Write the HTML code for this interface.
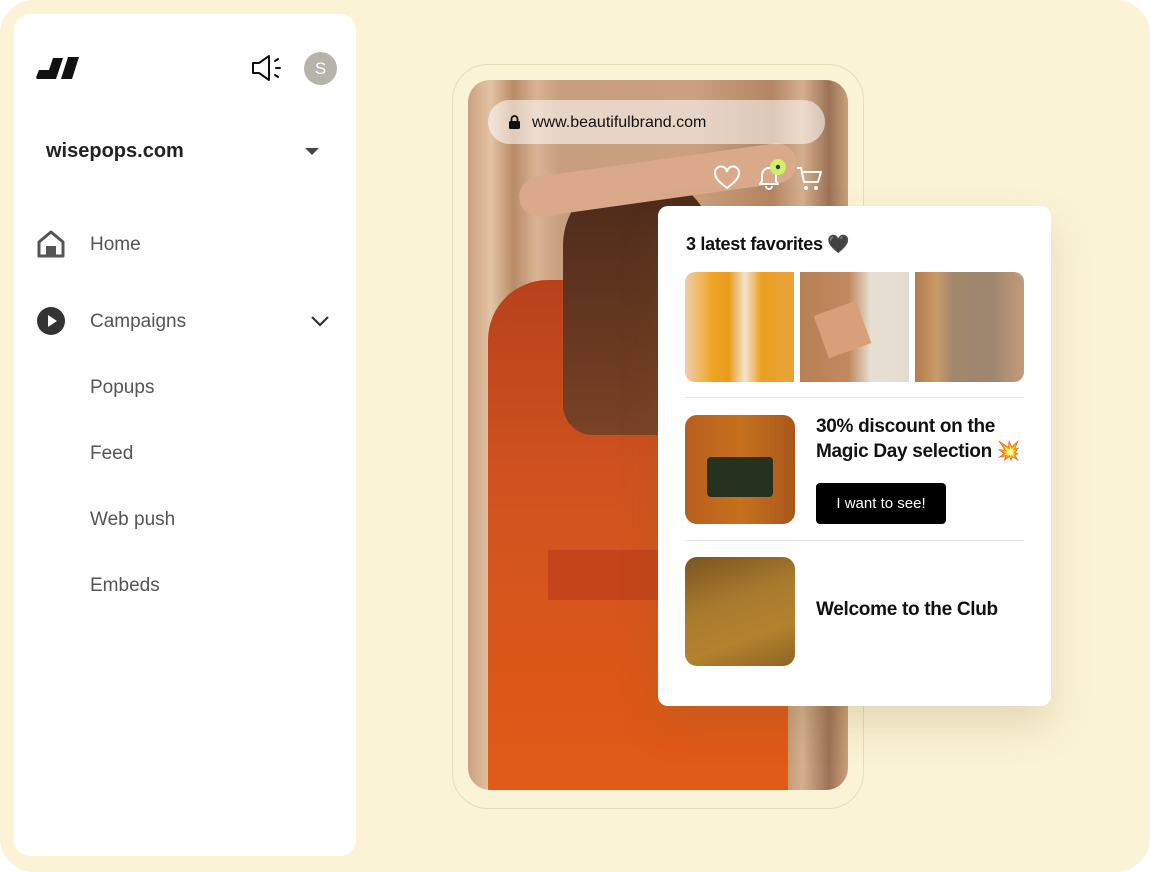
<!DOCTYPE html>
<html><head><meta charset="utf-8"><style>
*{margin:0;padding:0;box-sizing:border-box}
body{width:1150px;height:872px;background:#fff;font-family:"Liberation Sans",sans-serif;position:relative;overflow:hidden}
.bg{position:absolute;left:0;top:0;width:1150px;height:872px;background:#fbf3d6;border-radius:34px}
.side{position:absolute;left:14px;top:14px;width:342px;height:842px;background:#fff;border-radius:16px}
.t{position:absolute;white-space:nowrap}
.nav{font-size:19px;color:#555}
.phone{position:absolute;left:452px;top:64px;width:412px;height:745px;border:1.5px solid #e6dcb8;border-radius:36px;background:#fbf3d6}
.screen{position:absolute;left:468px;top:80px;width:380px;height:710px;border-radius:22px;overflow:hidden;
background:linear-gradient(90deg,#c9a282 0%,#e3c4a4 6%,#b98b66 12%,#d8b494 18%,#c89f7e 24%,#caa07e 60%,#b38663 80%,#d5b08e 88%,#9c7256 95%,#c9a07c 100%)}
.card{position:absolute;left:658px;top:206px;width:393px;height:500px;background:#fff;border-radius:10px;box-shadow:0 20px 40px rgba(120,100,40,.18)}
.img{position:absolute;overflow:hidden}
.b{font-weight:bold;letter-spacing:-0.3px}
</style></head><body>
<div class="bg"></div>
<div class="side">
<svg style="position:absolute;left:22px;top:42px" width="44" height="24" viewBox="0 0 44 24"><path d="M3 14h11l-3 9H2q-3 0-1-4z M17 2h10l-7 21H10z M32 1h11l-7 22H25z" fill="#111"/></svg>
<svg style="position:absolute;left:237px;top:40px" width="32" height="28" viewBox="0 0 32 28"><path d="M2 9h6l10-7v24L8 19H2z" fill="none" stroke="#111" stroke-width="2" stroke-linejoin="round"/><path d="M24 7l3-2M25 14h4M24 21l3 2" stroke="#111" stroke-width="2" stroke-linecap="round"/></svg>
<div style="position:absolute;left:290px;top:38px;width:33px;height:33px;border-radius:50%;background:#b6b3ab;color:#fff;font-size:17px;text-align:center;line-height:33px">S</div>
<div class="t b" style="left:32px;top:126px;font-size:20px;color:#222;letter-spacing:0">wisepops.com</div>
<div style="position:absolute;left:291px;top:134px;width:0;height:0;border-left:7px solid transparent;border-right:7px solid transparent;border-top:7px solid #444"></div>
<svg style="position:absolute;left:23px;top:216px" width="28" height="28" viewBox="0 0 28 28"><path d="M2 12L14 2l12 10v14H2z" fill="none" stroke="#555" stroke-width="3" stroke-linejoin="round"/><rect x="9" y="16" width="10" height="10" fill="#555"/></svg>
<div class="t nav" style="left:76px;top:220px">Home</div>
<svg style="position:absolute;left:23px;top:293px" width="28" height="28" viewBox="0 0 28 28"><circle cx="14" cy="14" r="14" fill="#333"/><path d="M11 8l9 6-9 6z" fill="#fff"/></svg>
<div class="t nav" style="left:76px;top:297px">Campaigns</div>
<svg style="position:absolute;left:296px;top:300px" width="20" height="14" viewBox="0 0 20 14"><path d="M2 3l8 8 8-8" fill="none" stroke="#333" stroke-width="2.2"/></svg>
<div class="t nav" style="left:76px;top:363px">Popups</div>
<div class="t nav" style="left:76px;top:429px">Feed</div>
<div class="t nav" style="left:76px;top:495px">Web push</div>
<div class="t nav" style="left:76px;top:561px">Embeds</div>
</div>
<div class="phone"></div>
<div class="screen">
 <div style="position:absolute;left:20px;top:200px;width:300px;height:510px;background:linear-gradient(180deg,#b8411c,#d0531f 40%,#e15a17 100%);border-radius:60px 60px 0 0"></div>
 <div style="position:absolute;left:95px;top:95px;width:150px;height:260px;background:linear-gradient(180deg,#4a2a1a,#6b3a22 70%,#7a4226);border-radius:70px 70px 30px 30px"></div>
 <div style="position:absolute;left:50px;top:80px;width:280px;height:40px;background:#d9a98a;border-radius:20px;transform:rotate(-8deg)"></div>
 <div style="position:absolute;left:80px;top:470px;width:160px;height:50px;background:#c4451a"></div>
 <div style="position:absolute;left:20px;top:20px;width:337px;height:44px;border-radius:22px;background:rgba(255,255,255,.55)"></div>
 <svg style="position:absolute;left:41px;top:35px" width="11" height="14" viewBox="0 0 11 14"><rect x="0" y="6" width="11" height="8" rx="1.5" fill="#111"/><path d="M2.5 6V4a3 3 0 016 0v2" fill="none" stroke="#111" stroke-width="1.8"/></svg>
 <div class="t" style="left:64px;top:34px;font-size:16px;color:#111">www.beautifulbrand.com</div>
 <svg style="position:absolute;left:245px;top:85px" width="28" height="26" viewBox="0 0 28 26"><path d="M14 23C6 17 2 13 2 8a6 6 0 0112-1 6 6 0 0112 1c0 5-4 9-12 15z" fill="none" stroke="#fff" stroke-width="2"/></svg>
 <svg style="position:absolute;left:288px;top:79px" width="32" height="32" viewBox="0 0 32 32"><path d="M4 25h18l-2-3v-6a7 7 0 00-14 0v6z M10 27a3 3 0 006 0" fill="none" stroke="#fff" stroke-width="2" stroke-linejoin="round"/><circle cx="22" cy="8" r="8" fill="#cdf26a"/><circle cx="22" cy="8" r="2.2" fill="#333"/></svg>
 <svg style="position:absolute;left:328px;top:86px" width="28" height="26" viewBox="0 0 28 26"><path d="M1 2h4l3 14h14l3-10H7" fill="none" stroke="#fff" stroke-width="2" stroke-linejoin="round"/><circle cx="10" cy="22" r="2" fill="#fff"/><circle cx="20" cy="22" r="2" fill="#fff"/></svg>
</div>
<div class="card">
 <div class="t b" style="left:28px;top:28px;font-size:18px;color:#111">3 latest favorites 🖤</div>
 <div class="img" style="left:27px;top:66px;width:339px;height:110px;border-radius:10px">
  <div style="position:absolute;left:0;top:0;width:109px;height:110px;background:linear-gradient(90deg,#eecfae 0%,#f1a424 25%,#e89a1c 40%,#f3e4d0 55%,#eba020 70%,#e8a33a 100%)"></div>
  <div style="position:absolute;left:115px;top:0;width:109px;height:110px;background:linear-gradient(90deg,#b97e54 0%,#c08a60 45%,#e6dfd4 65%,#e4dcd0 100%)"><div style="position:absolute;left:20px;top:35px;width:45px;height:45px;background:#d8a07a;transform:rotate(-20deg)"></div></div>
  <div style="position:absolute;left:230px;top:0;width:109px;height:110px;background:linear-gradient(90deg,#b47c4c 0%,#c99a6a 20%,#a3876c 35%,#9e8670 70%,#c49a7a 100%)"></div>
 </div>
 <div style="position:absolute;left:27px;top:191px;width:339px;height:1px;background:#e6e6e6"></div>
 <div class="img" style="left:27px;top:209px;width:110px;height:109px;border-radius:12px;background:linear-gradient(90deg,#b85e1e,#c6701e 50%,#a9581a)"><div style="position:absolute;left:22px;top:42px;width:66px;height:40px;background:#26321f;border-radius:4px"></div></div>
 <div class="t b" style="left:158px;top:208px;font-size:19px;color:#111;line-height:25px">30% discount on the<br>Magic Day selection 💥</div>
 <div style="position:absolute;left:158px;top:277px;width:130px;height:41px;background:#000;border-radius:4px;color:#fff;font-size:15px;text-align:center;line-height:41px">I want to see!</div>
 <div style="position:absolute;left:27px;top:334px;width:339px;height:1px;background:#e6e6e6"></div>
 <div class="img" style="left:27px;top:351px;width:110px;height:109px;border-radius:12px;background:linear-gradient(160deg,#7a531f,#a87a2e 40%,#b3822e 70%,#8e6424)"></div>
 <div class="t b" style="left:158px;top:393px;font-size:19px;color:#111">Welcome to the Club</div>
</div>
</body></html>
